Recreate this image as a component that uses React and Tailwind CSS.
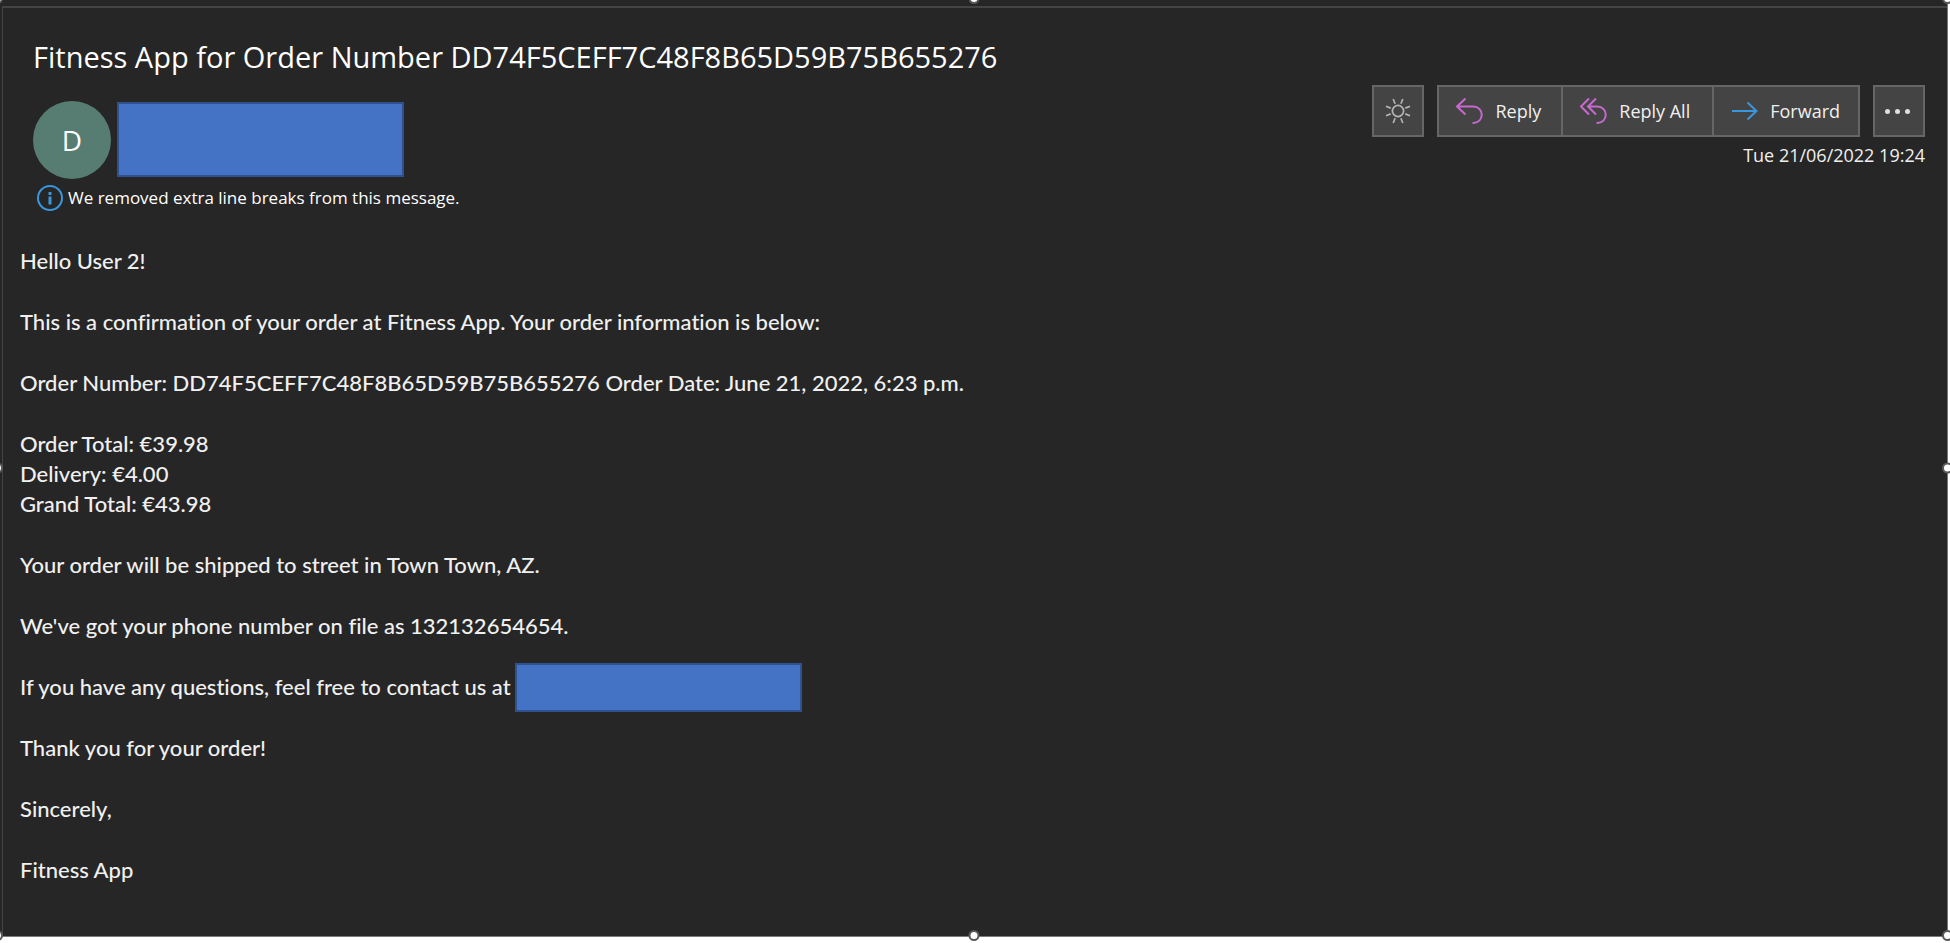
const TEXT = "font-['Open_Sans','Noto_Sans',sans-serif]";

function Handle({ className }) {
  return (
    <span
      aria-hidden="true"
      className={`absolute size-[11px] rounded-full border-2 border-[#595959] bg-white ${className}`}
    />
  );
}

function SunIcon() {
  return (
    <svg width="26" height="26" viewBox="0 0 26 26" fill="none" stroke="#b4b4b4" strokeWidth="1.7">
      <circle cx="13" cy="13" r="5.6" />
      <path d="M10.1 5.7 8.2 1M15.9 5.7 17.8 1M10.1 20.3 8.2 25M15.9 20.3 17.8 25M5.7 10.1 1 8.2M5.7 15.9 1 17.8M20.3 10.1 25 8.2M20.3 15.9 25 17.8" />
    </svg>
  );
}

function ReplyIcon() {
  return (
    <svg width="28" height="28" viewBox="0 0 28 28" fill="none" stroke="#c869cf" strokeWidth="2">
      <path d="M10.5 1.5 2 9.500l8.500 8M2.300 9.500H18.500a8 8 0 0 1 0 16.500h-1" />
    </svg>
  );
}

function ReplyAllIcon() {
  return (
    <svg width="28" height="28" viewBox="0 0 28 28" fill="none" stroke="#c869cf" strokeWidth="2">
      <path d="M10 1.500 2 9.500l8 8M17 1.500 9 9.500l8 8M9.300 9.500H18.500a8 8 0 0 1 0 16.500h-1" />
    </svg>
  );
}

function ForwardIcon() {
  return (
    <svg width="26" height="20" viewBox="0 0 26 20" fill="none" stroke="#3a96dd" strokeWidth="2">
      <path d="M0 10h24.500M15.500 1.500 24.500 10 15.500 18.500" />
    </svg>
  );
}

function InfoIcon() {
  return (
    <svg width="26" height="26" viewBox="0 0 26 26" fill="none" className="shrink-0">
      <circle cx="13" cy="13" r="12" stroke="#3a96dd" strokeWidth="2" />
      <path d="M11.500 7h3v3h-3zM11.500 11.500h3v8h-3z" fill="#3a96dd" />
    </svg>
  );
}

const actionClass = "flex items-center gap-3 h-12";

export default function App() {
  return (
    <div className={`min-h-screen overflow-hidden bg-white pr-[2px] pb-[6px] flex flex-col text-[#f0f0f0] ${TEXT}`}>
      <main className="relative grow flex flex-col border-r border-b border-[#7a7a7a] bg-[#262626] pl-[2px] pt-[6px]">
        <div className="grow border-l border-t-2 border-[#444444] pb-12">
          <header className="pl-[30px] pr-[22px] pt-7">
            <h1 className="text-[29px] leading-[42px] text-white">
              Fitness App for Order Number DD74F5CEFF7C48F8B65D59B75B655276
            </h1>
            <div className="flex items-start justify-between">
              <div className="flex items-center gap-[6px] pt-[23px]">
                <div className="flex size-[78px] items-center justify-center rounded-full bg-[#577d73] text-[28px] text-white">
                  D
                </div>
                <div className="mb-[2px] h-[75px] w-[287px] border-2 border-[#2f528f] bg-[#4472c4]" />
              </div>
              <div className="flex flex-col items-end pt-[7px]">
                <div className="flex gap-[13px] text-[18px]">
                  <button type="button" aria-label="Switch background" className="flex size-[52px] items-center justify-center border-2 border-[#666666] bg-[#444444]">
                    <SunIcon />
                  </button>
                  <div className="flex divide-x-2 divide-[#666666] border-2 border-[#666666] bg-[#444444]">
                    <button type="button" className={`${actionClass} pl-4 pr-5`}>
                      <ReplyIcon />
                      Reply
                    </button>
                    <button type="button" className={`${actionClass} pl-4 pr-[22px]`}>
                      <ReplyAllIcon />
                      Reply All
                    </button>
                    <button type="button" className={`${actionClass} px-[18px]`}>
                      <ForwardIcon />
                      Forward
                    </button>
                  </div>
                  <button type="button" aria-label="More actions" className="flex size-[52px] items-center justify-center gap-[5px] border-2 border-[#666666] bg-[#444444] pr-1">
                    <span className="size-[5px] rounded-full bg-[#e0e0e0]" />
                    <span className="size-[5px] rounded-full bg-[#e0e0e0]" />
                    <span className="size-[5px] rounded-full bg-[#e0e0e0]" />
                  </button>
                </div>
                <time dateTime="2022-06-21T19:24" className="pt-1 text-[18px] leading-7">
                  Tue 21/06/2022 19:24
                </time>
              </div>
            </div>
            <p className="flex items-center gap-[5px] pl-1 pt-[6px] text-[17px] leading-[26px] font-medium text-white">
              <InfoIcon />
              We removed extra line breaks from this message.
            </p>
          </header>

          <article className="flex flex-col gap-[31px] pl-[17px] pt-[35px] font-['Lato','Open_Sans',sans-serif] text-[22px] leading-[30px] font-medium [font-variant-ligatures:none]">
            <p>Hello User 2!</p>
            <p>This is a confirmation of your order at Fitness App. Your order information is below:</p>
            <p>Order Number: DD74F5CEFF7C48F8B65D59B75B655276 Order Date: June 21, 2022, 6:23 p.m.</p>
            <p>
              Order Total: €39.98
              <br />
              Delivery: €4.00
              <br />
              Grand Total: €43.98
            </p>
            <p>Your order will be shipped to street in Town Town, AZ.</p>
            <p>We've got your phone number on file as 132132654654.</p>
            <div className="flex h-[30px] items-center gap-1">
              <p>If you have any questions, feel free to contact us at</p>
              <div className="h-[49px] w-[287px] border-2 border-[#2f528f] bg-[#4472c4]" />
            </div>
            <p>Thank you for your order!</p>
            <p>Sincerely,</p>
            <p>Fitness App</p>
          </article>
        </div>

        <Handle className="-left-2 -top-[7px]" />
        <Handle className="left-1/2 -top-[7px] -translate-x-1/2" />
        <Handle className="-right-[6px] -top-[7px]" />
        <Handle className="-left-2 top-1/2 -translate-y-1/2" />
        <Handle className="-right-[6px] top-1/2 -translate-y-1/2" />
        <Handle className="-left-2 -bottom-[5px]" />
        <Handle className="left-1/2 -bottom-[5px] -translate-x-1/2" />
        <Handle className="-right-[6px] -bottom-[5px]" />
      </main>
    </div>
  );
}
